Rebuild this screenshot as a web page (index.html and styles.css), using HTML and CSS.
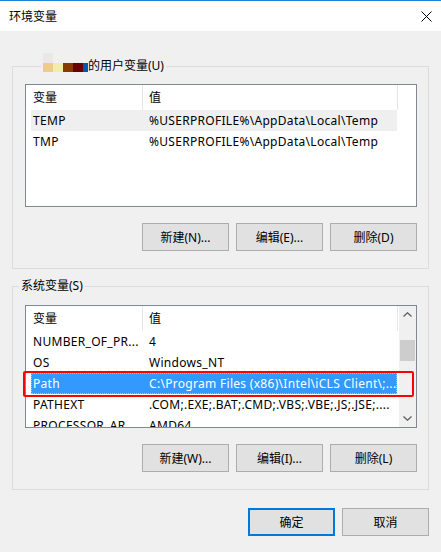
FILE: index.html
```html
<!DOCTYPE html>
<html>
<head>
  <meta charset="utf-8">
  <title>环境变量</title>
  <link rel="stylesheet" href="styles.css">
</head>
<body>
  <div class="window">
    <div class="titlebar">
      <span class="title">环境变量</span>
      <svg class="close" width="11" height="11" viewBox="0 0 11 11">
        <path d="M0.5 0.5 L10.5 10.5 M10.5 0.5 L0.5 10.5" stroke="#000" stroke-width="1" fill="none"/>
      </svg>
    </div>

    <div class="body">
      <fieldset class="group">
        <legend class="legend-user">
          <svg class="redacted" width="45" height="19" viewBox="0 0 45 19">
            <rect x="0" y="0" width="10" height="10" fill="#e8e8e8"/>
            <rect x="0" y="10" width="10" height="9" fill="#f0cc88"/>
            <rect x="10" y="10" width="10" height="9" fill="#f0eeaa"/>
            <rect x="20" y="10" width="10" height="9" fill="#883a00"/>
            <rect x="30" y="10" width="10" height="9" fill="#680000"/>
            <rect x="40" y="10" width="5" height="9" fill="#0058b0"/>
          </svg>的用户变量(U)
        </legend>
        <div class="listbox">
          <div class="list-view">
            <div class="list-header">
              <div class="col col-name">变量</div>
              <div class="col col-value">值</div>
            </div>
            <div class="row row-hover">
              <div class="col col-name">TEMP</div>
              <div class="col col-value">%USERPROFILE%\AppData\Local\Temp</div>
            </div>
            <div class="row">
              <div class="col col-name">TMP</div>
              <div class="col col-value">%USERPROFILE%\AppData\Local\Temp</div>
            </div>
          </div>
        </div>
        <div class="btn-row">
          <button class="btn">新建(N)...</button>
          <button class="btn">编辑(E)...</button>
          <button class="btn">删除(D)</button>
        </div>
      </fieldset>

      <fieldset class="group group-system">
        <legend class="legend-system">系统变量(S)</legend>
        <div class="listbox">
          <div class="list-view">
            <div class="list-header">
              <div class="col col-name">变量</div>
              <div class="col col-value">值</div>
            </div>
            <div class="row">
              <div class="col col-name">NUMBER_OF_PR...</div>
              <div class="col col-value">4</div>
            </div>
            <div class="row">
              <div class="col col-name">OS</div>
              <div class="col col-value">Windows_NT</div>
            </div>
            <div class="row row-selected">
              <div class="col col-name">Path</div>
              <div class="col col-value">C:\Program Files (x86)\Intel\iCLS Client\;...</div>
            </div>
            <div class="row">
              <div class="col col-name">PATHEXT</div>
              <div class="col col-value">.COM;.EXE;.BAT;.CMD;.VBS;.VBE;.JS;.JSE;....</div>
            </div>
            <div class="row">
              <div class="col col-name">PROCESSOR_AR...</div>
              <div class="col col-value">AMD64</div>
            </div>
          </div>
          <div class="scrollbar">
            <div class="scroll-arrow">
              <svg width="9" height="5" viewBox="0 0 9 5"><polyline points="0.5,4.5 4.5,0.8 8.5,4.5" stroke="#606060" stroke-width="1.3" fill="none"/></svg>
            </div>
            <div class="scroll-track">
              <div class="scroll-thumb"></div>
            </div>
            <div class="scroll-arrow">
              <svg width="9" height="5" viewBox="0 0 9 5"><polyline points="0.5,0.5 4.5,4.2 8.5,0.5" stroke="#606060" stroke-width="1.3" fill="none"/></svg>
            </div>
          </div>
          <!-- red mark drawn over the Path row -->
          <div class="annotation"></div>
        </div>
        <div class="btn-row">
          <button class="btn">新建(W)...</button>
          <button class="btn">编辑(I)...</button>
          <button class="btn">删除(L)</button>
        </div>
      </fieldset>

      <div class="footer">
        <button class="btn btn-default">确定</button>
        <button class="btn">取消</button>
      </div>
    </div>
  </div>
</body>
</html>
```

FILE: styles.css
```css
body {
  margin: 0;
  background: #f0f0f0;
  font-family: "Noto Sans", "Noto Sans CJK SC", sans-serif;
  font-size: 12px;
  color: #000;
}
.window {
  width: 441px;
  height: 552px;
  background: #f0f0f0;
  overflow: hidden;
}
.titlebar {
  height: 30px;
  border-top: 1px solid #1883d7;
  background: #fff;
  display: flex;
  align-items: center;
  justify-content: space-between;
  padding: 0 9px;
}
.close {
  display: block;
}
.body {
  padding: 27px 12px 0 12px;
}
.group {
  margin: 0;
  padding: 10px 11px 17px 12px;
  border: 1px solid #dcdcdc;
  min-width: 0;
}
.group-system {
  margin-top: 9px;
  padding-top: 11px;
}
.group legend {
  padding: 0 2px;
  line-height: 16px;
  white-space: nowrap;
}
.legend-user {
  margin-left: 16px;
}
.legend-system {
  margin-left: -6px;
}
.redacted {
  vertical-align: -2px;
  margin-top: -8px;
}
.listbox {
  position: relative;
  height: 123px;
  box-sizing: border-box;
  border: 1px solid #828790;
  background: #fff;
  display: flex;
}
.list-view {
  flex: 1;
  padding-left: 5px;
  overflow: hidden;
}
.list-header {
  display: flex;
  height: 25px;
  width: 367px;
}
.list-header .col {
  box-sizing: border-box;
  border-right: 1px solid #e5e5e5;
  line-height: 25px;
}
.list-header .col-name {
  width: 112px;
  padding-left: 2px;
}
.list-header .col-value {
  width: 255px;
  padding-left: 6px;
}
.row {
  display: flex;
  height: 21px;
  width: 366px;
  line-height: 21px;
  white-space: nowrap;
  letter-spacing: 0.3px;
}
.row .col-name {
  width: 112px;
  padding-left: 2px;
  box-sizing: border-box;
  overflow: hidden;
}
.row .col-value {
  flex: 1;
  padding-left: 6px;
  overflow: hidden;
}
.row-hover {
  background: #efefef;
}
.row-selected {
  background: #3399ff;
  color: #fff;
  outline: 1px dotted #9cc8f0;
  outline-offset: -1px;
}
.scrollbar {
  width: 17px;
  background: #f0f0f0;
  display: flex;
  flex-direction: column;
}
.scroll-arrow {
  height: 17px;
  display: flex;
  align-items: center;
  justify-content: center;
}
.scroll-track {
  flex: 1;
}
.scroll-thumb {
  margin: 17px 1px 0 1px;
  height: 21px;
  background: #cdcdcd;
}
.annotation {
  position: absolute;
  left: -3px;
  top: 65px;
  width: 391px;
  height: 26px;
  box-sizing: border-box;
  border: 2px solid #ff0000;
  border-radius: 2px;
}
.btn-row {
  display: flex;
  justify-content: flex-end;
  gap: 7px;
  margin-top: 16px;
}
.btn {
  width: 87px;
  height: 28px;
  box-sizing: border-box;
  padding: 0;
  background: #e1e1e1;
  border: 1px solid #adadad;
  font: inherit;
  color: #000;
}
.btn-default {
  border: 2px solid #0078d7;
}
.footer {
  display: flex;
  justify-content: flex-end;
  gap: 7px;
  margin-top: 18px;
}
```
